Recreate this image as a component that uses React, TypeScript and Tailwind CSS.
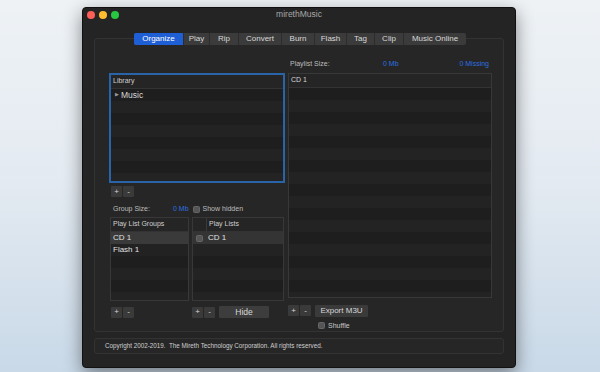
import React from "react";

const tabs = ["Organize", "Play", "Rip", "Convert", "Burn", "Flash", "Tag", "Clip", "Music Online"];
const tabW = [49, 26, 29, 43, 33, 32, 28, 29, 63];

function Stripes({ count, start = 0 }: { count: number; start?: number }) {
  return (
    <>
      {Array.from({ length: count }).map((_, i) => (
        <div
          key={i}
          className={(i + start) % 2 === 0 ? "h-[12px] shrink-0 bg-[#1e1e1e]" : "h-[12px] shrink-0 bg-[#232323]"}
        />
      ))}
    </>
  );
}

function SmallBtn({ label }: { label: string }) {
  return (
    <div className="w-[11px] h-[11px] bg-[#3a3a3a] rounded-[1px] flex items-center justify-center text-[8px] leading-none text-[#d8d8d8]">
      {label}
    </div>
  );
}

function PlusMinus() {
  return (
    <div className="flex gap-[1px]">
      <SmallBtn label="+" />
      <SmallBtn label="-" />
    </div>
  );
}

function Check() {
  return <div className="w-[7px] h-[7px] rounded-[1.5px] bg-[#555] border border-[#666]" />;
}

export default function App() {
  return (
    <div
      className="w-[600px] h-[372px] overflow-hidden bg-gradient-to-b from-[#eef2f5] via-[#e3eaf1] to-[#c9d9e8] pl-[82px] pt-[7px]"
      style={{ fontFamily: '"Liberation Sans", Arial, sans-serif' }}
    >
      <div className="w-[434px] h-[361px] bg-[#242424] rounded-[4px] shadow-[0_6px_18px_rgba(0,0,0,0.45)] border border-[#111] flex flex-col">
        {/* title bar */}
        <div className="h-[13px] relative flex items-center px-[4px] shrink-0">
          <div className="flex gap-[4px] items-center">
            <div className="w-[8px] h-[8px] rounded-full bg-[#fe5f57]" />
            <div className="w-[8px] h-[8px] rounded-full bg-[#febc2e]" />
            <div className="w-[8px] h-[8px] rounded-full bg-[#28c840]" />
          </div>
          <div className="absolute inset-0 flex items-center justify-center text-[8.5px] text-[#a8a8a8]">mirethMusic</div>
        </div>

        {/* tabs */}
        <div className="flex justify-center mt-[12px] relative z-10 ml-[2px]">
          <div className="flex h-[12px] rounded-[2px] overflow-hidden bg-[#3b3b3b]">
            {tabs.map((t, i) => (
              <div
                key={t}
                style={{ width: tabW[i] }}
                className={
                  i === 0
                    ? "flex items-center justify-center text-[8px] text-white bg-[#1f5fd6]"
                    : "flex items-center justify-center text-[8px] text-[#d8d8d8] border-l border-[#2c2c2c]"
                }
              >
                {t}
              </div>
            ))}
          </div>
        </div>

        {/* group box */}
        <div className="mx-[11px] mt-[-7px] h-[294px] border border-[#333] rounded-[3px] bg-[#262626] flex pl-[14px] pt-[21px] gap-[3px] shrink-0">
          {/* left column */}
          <div className="w-[176px] flex flex-col">
            <div className="mt-[13px] h-[110px] border-2 border-[#2a64a8] bg-[#1e1e1e] flex flex-col overflow-hidden">
              <div className="h-[14px] shrink-0 bg-[#252525] border-b border-[#333] flex items-center pl-[2px] text-[7px] text-[#d0d0d0]">
                Library
              </div>
              <div className="h-[12px] shrink-0 bg-[#1e1e1e] flex items-center pl-[4px] gap-[2px]">
                <span className="text-[5px] text-[#999]">▶</span>
                <span className="text-[8.5px] text-[#d8d8d8]">Music</span>
              </div>
              <Stripes count={8} start={1} />
            </div>
            <div className="mt-[3px] ml-[2px]">
              <PlusMinus />
            </div>
            <div className="mt-[8px] h-[9px] flex items-center text-[7px] text-[#bdbdbd] ml-[4px]">
              <span className="w-[60px]">Group Size:</span>
              <span className="text-[#2d6fe0]">0 Mb</span>
              <div className="ml-[4px] mr-[3px]">
                <Check />
              </div>
              <span>Show hidden</span>
            </div>
            <div className="mt-[3px] flex gap-[3px] h-[84px] ml-[1px]">
              <div className="w-[79px] border border-[#383838] bg-[#1e1e1e] flex flex-col overflow-hidden">
                <div className="h-[14px] shrink-0 bg-[#252525] border-b border-[#333] flex items-center pl-[2px] text-[7px] text-[#d0d0d0]">
                  Play List Groups
                </div>
                <div className="h-[12px] shrink-0 bg-[#3a3a3a] flex items-center pl-[2px] text-[8px] text-[#e0e0e0]">CD 1</div>
                <div className="h-[12px] shrink-0 bg-[#222] flex items-center pl-[2px] text-[8px] text-[#e0e0e0]">Flash 1</div>
                <Stripes count={4} />
              </div>
              <div className="w-[92px] border border-[#383838] bg-[#1e1e1e] flex flex-col overflow-hidden">
                <div className="h-[14px] shrink-0 bg-[#252525] border-b border-[#333] flex items-center text-[7px] text-[#d0d0d0]">
                  <div className="w-[14px] h-full border-r border-[#3a3a3a]" />
                  <span className="pl-[2px]">Play Lists</span>
                </div>
                <div className="h-[12px] shrink-0 bg-[#343434] flex items-center pl-[3px] text-[8px] text-[#e0e0e0] gap-[5px]">
                  <Check />
                  <span>CD 1</span>
                </div>
                <Stripes count={5} start={1} />
              </div>
            </div>
            <div className="mt-[5px] flex items-center ml-[2px]">
              <PlusMinus />
              <div className="ml-[58px]">
                <PlusMinus />
              </div>
              <div className="ml-[4px] w-[50px] h-[12px] bg-[#3d3d3d] rounded-[1px] flex items-center justify-center text-[8.5px] text-[#d8d8d8]">
                Hide
              </div>
            </div>
          </div>

          {/* right column */}
          <div className="w-[204px] flex flex-col">
            <div className="h-[8px] flex items-center text-[7px] text-[#bdbdbd] ml-[2px]">
              <span className="w-[93px]">Playlist Size:</span>
              <span className="text-[#2d6fe0]">0 Mb</span>
              <span className="ml-auto mr-[3px] text-[#2d6fe0]">0 Missing</span>
            </div>
            <div className="mt-[5px] h-[226px] border border-[#383838] bg-[#1e1e1e] flex flex-col overflow-hidden">
              <div className="h-[14px] shrink-0 bg-[#252525] border-b border-[#333] flex items-center pl-[2px] text-[7px] text-[#d8d8d8]">
                CD 1
              </div>
              <Stripes count={18} />
            </div>
            <div className="mt-[7px] flex items-center">
              <PlusMinus />
              <div className="ml-[4px] w-[53px] h-[12px] bg-[#3a3a3a] rounded-[1px] flex items-center justify-center text-[8px] text-[#d8d8d8]">
                Export M3U
              </div>
            </div>
            <div className="mt-[4px] ml-[30px] flex items-center gap-[3px] text-[7px] text-[#c8c8c8]">
              <Check />
              <span>Shuffle</span>
            </div>
          </div>
        </div>

        {/* footer */}
        <div className="mx-[11px] mt-[6px] h-[16px] border border-[#333] rounded-[3px] bg-[#262626] flex items-center pl-[10px] text-[6.3px] text-[#cfcfcf] whitespace-pre shrink-0">
          Copyright 2002-2019.  The Mireth Technology Corporation. All rights reserved.
        </div>
      </div>
    </div>
  );
}
